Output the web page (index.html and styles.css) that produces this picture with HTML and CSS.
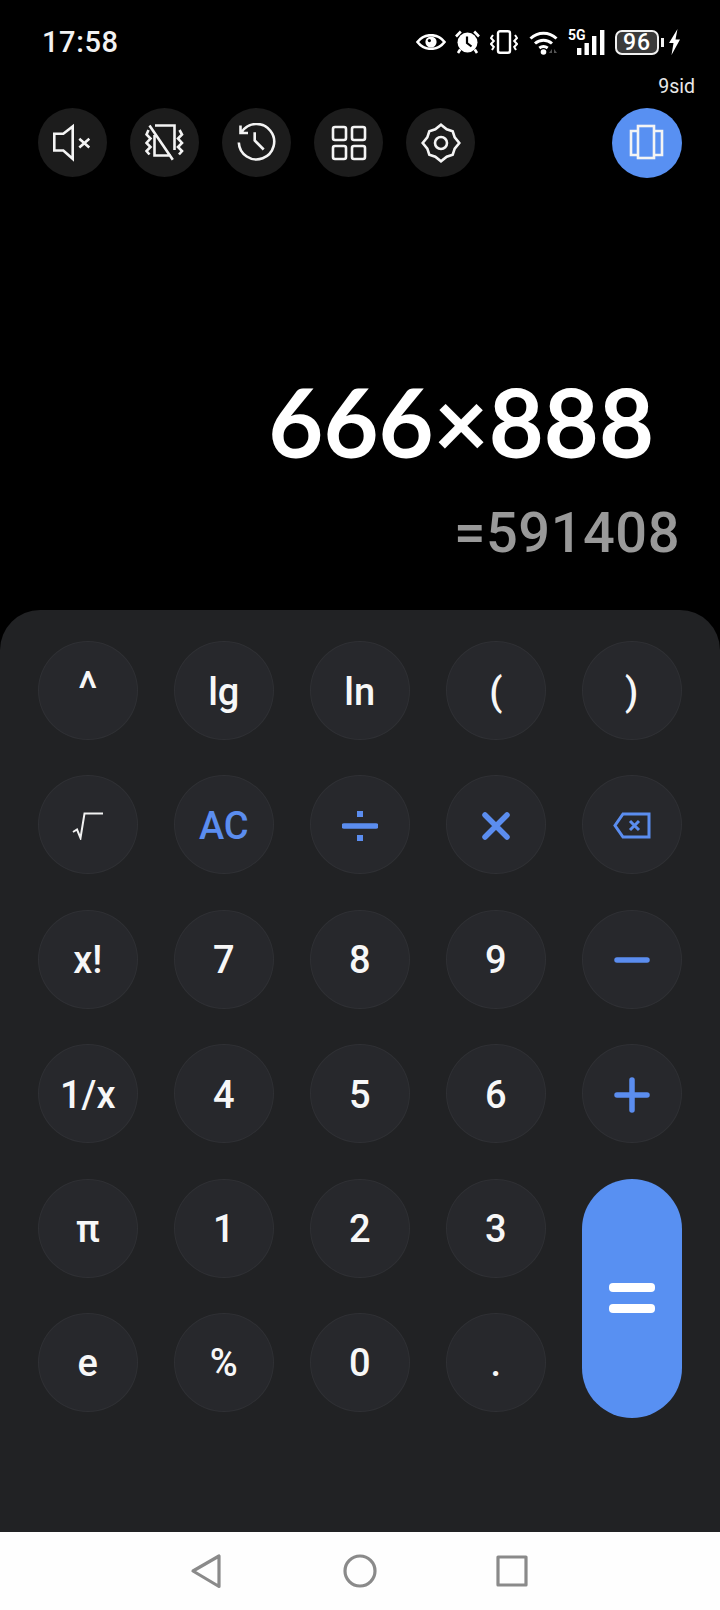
FILE: index.html
```html
<!DOCTYPE html>
<html lang="en">
<head>
    <meta charset="UTF-8">
    <meta name="viewport" content="width=device-width, initial-scale=1.0">
    <title>Calculator</title>
    <link rel="stylesheet" href="styles.css">
</head>
<body>
<div class="phone">

    <div class="statusBar">
        <span class="clock">17:58</span>
        <div class="statusIcons">
            <svg class="eyeIcon" viewBox="0 0 30 16"><path d="M1.5 8C5 3.4 9.6 1.2 15 1.2S25 3.4 28.5 8C25 12.6 20.4 14.8 15 14.8S5 12.6 1.5 8Z" fill="none" stroke="#fff" stroke-width="2.6"/><circle cx="15" cy="8" r="5.6" fill="#fff"/><circle cx="13.4" cy="6.6" r="1.6" fill="#000"/></svg>
            <svg class="alarmIcon" viewBox="0 0 25 24"><circle cx="12.5" cy="12.5" r="10" fill="#fff"/><path d="M1 6.5 5.8 1.5M24 6.5 19.2 1.5M5.2 19.5 3 23M19.8 19.5 22 23" stroke="#fff" stroke-width="2.6" fill="none"/><path d="M12 6.500V13L16.500 16.500" stroke="#000" stroke-width="2.200" fill="none"/></svg>
            <svg class="vibrateIcon" viewBox="0 0 28 24"><rect x="8" y="1.200" width="12" height="21.600" rx="2" fill="none" stroke="#fff" stroke-width="2.400"/><path d="M3 5 1 8 3.800 11 1 14 3.800 17 2 20M25 5 27 8 24.200 11 27 14 24.200 17 26 20" fill="none" stroke="#fff" stroke-width="2"/></svg>
            <svg class="wifiIcon" viewBox="0 0 31 26"><path d="M1.500 9.500C9 2.500 20 2.500 27.500 9.500M6 14.500C11 10 18 10 23 14.500M10.300 19C13 17 16 17 18.700 19" fill="none" stroke="#fff" stroke-width="3"/><circle cx="14.500" cy="23" r="2.800" fill="#fff"/><path d="M20 24 23 20V24ZM25 20 28 24H25Z" fill="#555"/></svg>
            <svg class="signalIcon" viewBox="0 0 37 26"><text x="0" y="11" class="signalText">5G</text><rect x="9" y="19" width="4.400" height="7" fill="#fff"/><rect x="16.500" y="14" width="4.400" height="12" fill="#fff"/><rect x="24" y="7" width="4.400" height="19" fill="#fff"/><rect x="32" y="1" width="4.400" height="25" fill="#fff"/></svg>
            <div class="battery"><span class="batteryLevel">96</span></div>
            <svg class="boltIcon" viewBox="0 0 11 26"><path d="M8.500 0 0 14H4.500L2.500 26 11 10.500H6.500Z" fill="#fff"/></svg>
        </div>
    </div>

    <div class="carrierTag">9sid</div>

    <div class="toolbar">
        <button type="button" class="toolButton">
            <svg viewBox="0 0 40 40"><path d="M1.300 10.800H10.300L19.700 3.500V35.800L10.300 27.500H1.300ZM26.300 15.800 36.300 24.500M36.300 15.800 26.300 24.500" class="toolStroke"/></svg>
        </button>
        <button type="button" class="toolButton">
            <svg viewBox="0 0 40 40"><path d="M10 2.500H29.500V27M9.500 12V32.500H26M4.500 2.500 27.800 36.800M3.500 7 1.500 11.500 5.500 15.500 1.500 20 5.500 24 1.500 28 4.500 31.500M34.500 7 37 11.500 33 15.500 37 20 33 24 37 28 34 31.500" class="toolStroke"/></svg>
        </button>
        <button type="button" class="toolButton">
            <svg viewBox="0 0 40 40"><path d="M4.700 9A17.700 17.700 0 1 1 1.800 19.500M3.500 2.500V10H11M17.700 9.200V17.500L26.700 26.500" class="toolStroke"/></svg>
        </button>
        <button type="button" class="toolButton">
            <svg viewBox="0 0 40 40"><rect x="4" y="4" width="13" height="13" rx="2" class="toolStroke"/><rect x="23" y="4" width="13" height="13" rx="2" class="toolStroke"/><rect x="4" y="23" width="13" height="13" rx="2" class="toolStroke"/><rect x="23" y="23" width="13" height="13" rx="2" class="toolStroke"/></svg>
        </button>
        <button type="button" class="toolButton">
            <svg viewBox="0 0 40 40"><path d="M20 1.700 25.700 6.300 31.700 8.300 33.700 14.300 38.300 20 33.700 25.700 31.700 31.700 25.700 33.700 20 38.300 14.300 33.700 8.300 31.700 6.300 25.700 1.700 20 6.300 14.300 8.300 8.300 14.300 6.300Z" class="toolStroke"/><circle cx="20" cy="20" r="6" class="toolStroke"/></svg>
        </button>
        <button type="button" class="toolButton toolButtonActive">
            <svg viewBox="0 0 40 40"><rect x="11" y="3" width="16" height="32" class="toolStroke"/><path d="M11 8H4V32H11M27 8H35V32H27" class="toolStroke"/></svg>
        </button>
    </div>

    <div class="display">
        <div class="expression">666×888</div>
        <div class="result">=591408</div>
    </div>

    <div class="keypad">
        <div class="keys">
            <button type="button" class="key keyCaret">^</button>
            <button type="button" class="key">lg</button>
            <button type="button" class="key">ln</button>
            <button type="button" class="key">(</button>
            <button type="button" class="key">)</button>

            <button type="button" class="key">
                <svg class="rootIcon" viewBox="0 0 32 28"><path d="M1 20 5 17.500 8.500 26 12.500 1.500H31" fill="none" stroke="#f2f2f2" stroke-width="2"/></svg>
            </button>
            <button type="button" class="key keyBlue">AC</button>
            <button type="button" class="key" aria-label="divide">
                <svg class="opIcon" viewBox="0 0 36 36"><path d="M2 18H34" class="opStroke"/><rect x="15" y="3" width="6" height="6" fill="#5b8def"/><rect x="15" y="27" width="6" height="6" fill="#5b8def"/></svg>
            </button>
            <button type="button" class="key" aria-label="multiply">
                <svg class="opIcon" viewBox="0 0 36 36"><path d="M7 7 29 29M29 7 7 29" class="opStroke"/></svg>
            </button>
            <button type="button" class="key" aria-label="backspace">
                <svg class="backIcon" viewBox="0 0 38 27"><path d="M36 2H10L2 13.500 10 25H36Z" fill="none" stroke="#5b8def" stroke-width="3"/><path d="M17 9 26 18M26 9 17 18" fill="none" stroke="#5b8def" stroke-width="3"/></svg>
            </button>

            <button type="button" class="key">x!</button>
            <button type="button" class="key">7</button>
            <button type="button" class="key">8</button>
            <button type="button" class="key">9</button>
            <button type="button" class="key" aria-label="minus">
                <svg class="opIcon" viewBox="0 0 36 36"><path d="M3 18H33" class="opStroke"/></svg>
            </button>

            <button type="button" class="key">1/x</button>
            <button type="button" class="key">4</button>
            <button type="button" class="key">5</button>
            <button type="button" class="key">6</button>
            <button type="button" class="key" aria-label="plus">
                <svg class="opIcon" viewBox="0 0 36 36"><path d="M3 18H33M18 3V33" class="opStroke"/></svg>
            </button>

            <button type="button" class="key">π</button>
            <button type="button" class="key">1</button>
            <button type="button" class="key">2</button>
            <button type="button" class="key">3</button>
            <button type="button" class="keyEquals" aria-label="equals">
                <span class="equalsBar"></span>
                <span class="equalsBar"></span>
            </button>

            <button type="button" class="key">e</button>
            <button type="button" class="key">%</button>
            <button type="button" class="key">0</button>
            <button type="button" class="key">.</button>
        </div>
    </div>

    <div class="navBar">
        <svg class="navIcon" viewBox="0 0 36 36"><path d="M29 3V33.500L3 18Z" class="navStroke"/></svg>
        <svg class="navIcon" viewBox="0 0 36 36"><circle cx="18" cy="18" r="15" class="navStroke"/></svg>
        <svg class="navIcon" viewBox="0 0 36 36"><rect x="4" y="4" width="28" height="28" class="navStroke"/></svg>
    </div>

</div>
</body>
</html>
```

FILE: styles.css
```css
* {
    box-sizing: border-box;
}

body {
    margin: 0;
    background-color: #000;
    font-family: "Roboto", "Liberation Sans", sans-serif;
}

.phone {
    display: flex;
    flex-direction: column;
    width: 720px;
    height: 1610px;
    overflow: hidden;
    background-color: #000;
}

/* Status bar */
.statusBar {
    display: flex;
    justify-content: space-between;
    align-items: center;
    height: 28px;
    margin-top: 28px;
    padding: 0 40px 0 42px;
    color: #f2f2f2;
}

.clock {
    font-size: 29px;
    font-weight: 500;
    letter-spacing: 0.6px;
}

.statusIcons {
    display: flex;
    align-items: center;
}

.eyeIcon {
    width: 30px;
    height: 16px;
    margin-right: 9px;
}

.alarmIcon {
    width: 25px;
    height: 24px;
    margin-right: 10px;
}

.vibrateIcon {
    width: 28px;
    height: 24px;
    margin-right: 11px;
}

.wifiIcon {
    width: 31px;
    height: 26px;
    margin-right: 8px;
}

.signalIcon {
    width: 37px;
    height: 26px;
    margin-right: 10px;
    overflow: visible;
}

.signalText {
    fill: #fff;
    font-size: 14px;
    font-weight: 700;
    font-family: "Roboto", sans-serif;
}

.battery {
    position: relative;
    display: flex;
    justify-content: center;
    align-items: center;
    width: 44px;
    height: 25px;
    margin-right: 10px;
    background-color: #3b3b3b;
    border: 2px solid #f2f2f2;
    border-radius: 7px;
}

/* battery terminal */
.battery::after {
    content: '';
    position: absolute;
    top: 6px;
    right: -7px;
    width: 3px;
    height: 9px;
    background-color: #f2f2f2;
}

.batteryLevel {
    color: #fff;
    font-size: 23px;
    font-weight: 500;
    letter-spacing: 1px;
}

.boltIcon {
    width: 11px;
    height: 26px;
}

.carrierTag {
    height: 22px;
    margin-top: 20px;
    padding-right: 25px;
    color: #e8e8e8;
    font-size: 19.5px;
    line-height: 22px;
    text-align: right;
}

/* Tool buttons above the display */
.toolbar {
    display: flex;
    gap: 23px;
    margin-top: 10px;
    padding: 0 38.500px 0 38px;
}

.toolButton {
    display: flex;
    justify-content: center;
    align-items: center;
    width: 69px;
    height: 69px;
    padding: 0;
    background-color: #1c1c1c;
    border: none;
    border-radius: 50%;
}

.toolButton svg {
    width: 40px;
    height: 40px;
}

.toolButtonActive {
    width: 70px;
    height: 70px;
    margin-left: auto;
    background-color: #5890f2;
}

.toolStroke {
    fill: none;
    stroke: #f4f4f4;
    stroke-width: 2.6;
}

/* Expression and result */
.display {
    display: flex;
    flex: 1;
    flex-direction: column;
    align-items: flex-end;
    padding-right: 40px;
}

.expression {
    margin-top: 185px;
    padding-right: 26px;
    color: #fff;
    font-family: "Lato", sans-serif;
    font-size: 95px;
    font-weight: 700;
    line-height: 116px;
}

.result {
    margin-top: 21px;
    color: #999;
    font-size: 56px;
    font-weight: 500;
    letter-spacing: 0.5px;
    line-height: 66px;
}

/* Keypad panel */
.keypad {
    height: 922px;
    padding: 31px 0 0 38px;
    background-color: #212224;
    border-radius: 40px 40px 0 0;
}

.keys {
    display: grid;
    grid-template-columns: repeat(5, 99.5px);
    grid-auto-rows: 99px;
    column-gap: 36.5px;
    row-gap: 35.4px;
}

.key {
    display: flex;
    justify-content: center;
    align-items: center;
    padding: 2px 0 0;
    color: #f7f7f7;
    background-color: #27282c;
    border: 1px solid #2f3034;
    border-radius: 50%;
    font-family: "Roboto", sans-serif;
    font-size: 38px;
    font-weight: 500;
}

.keyCaret {
    padding: 0 0 4px;
    font-size: 48px;
    font-weight: 400;
}

.keyBlue {
    color: #5b8def;
}

.keyEquals {
    display: flex;
    flex-direction: column;
    justify-content: center;
    align-items: center;
    gap: 12px;
    height: 239px;
    padding: 0;
    grid-row: span 2;
    background-color: #5890f2;
    border: none;
    border-radius: 50px;
}

.equalsBar {
    width: 46px;
    height: 9px;
    background-color: #fff;
    border-radius: 4px;
}

.rootIcon {
    width: 32px;
    height: 28px;
}

.opIcon {
    width: 36px;
    height: 36px;
}

.opStroke {
    fill: none;
    stroke: #5b8def;
    stroke-width: 5.5;
    stroke-linecap: round;
}

.backIcon {
    width: 38px;
    height: 27px;
}

/* Navigation bar */
.navBar {
    display: flex;
    justify-content: center;
    align-items: center;
    gap: 116px;
    height: 78px;
    background-color: #fefefe;
}

.navIcon {
    width: 36px;
    height: 36px;
}

.navStroke {
    fill: none;
    stroke: #8a8a8a;
    stroke-width: 3.2;
    stroke-linejoin: round;
}
```
